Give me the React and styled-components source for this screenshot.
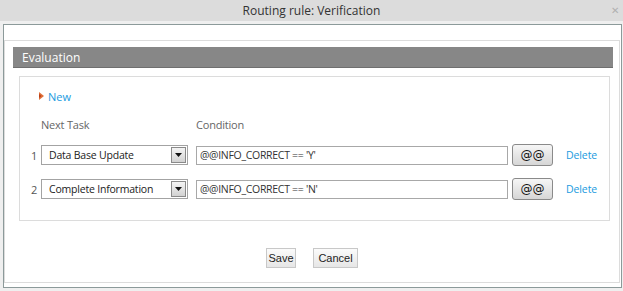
import styled, { createGlobalStyle } from "styled-components";

const Global = createGlobalStyle`
  html, body {
    margin: 0;
    padding: 0;
    background: #efefef;
    font-family: "Open Sans", "Liberation Sans", sans-serif;
  }
`

const Window = styled.div`
  width: 623px;
  height: 291px;
  background: #efefef;
  display: flex;
  flex-direction: column;
  overflow: hidden;
`

const TitleBar = styled.div`
  height: 21px;
  background: #dcdcdc;
  display: grid;
  grid-template-columns: 20px 1fr 20px;
  align-items: center;
  font-size: 12px;
  color: #333;
`

const Title = styled.div`
  grid-column: 2;
  text-align: center;
  line-height: 21px;
`

const Close = styled.div`
  color: #b0b0b0;
  font-size: 10px;
  line-height: 21px;
  text-align: center;
  padding-left: 4px;
`

const Panel = styled.div`
  margin: 3px 1px 0 3px;
  height: 262px;
  border: 1px solid #8c9a9a;
  background: #fff;
  display: flex;
  flex-direction: column;
`

const Toolbar = styled.div`
  height: 15px;
`

const Content = styled.div`
  height: 243px;
  margin-right: 1px;
  border: 1px solid #dcdcdc;
  box-sizing: border-box;
  display: flex;
  flex-direction: column;
`

const SectionHeader = styled.div`
  margin: 6px 6px 0 8px;
  height: 20px;
  background: #878787;
  border-bottom: 1px solid #6f6f6f;
  color: #fff;
  font-size: 12px;
  line-height: 21px;
  padding-left: 9px;
`

const Box = styled.div`
  margin: 8px 9px 0 14px;
  border: 1px solid #dcdcdc;
  padding: 11px 0 20px 11px;
`

const NewLink = styled.a`
  display: flex;
  align-items: center;
  gap: 3px;
  margin-left: 8px;
  height: 16px;
  color: #1a9be0;
  font-size: 11px;
  text-decoration: none;
`

const Table = styled.div`
  margin-top: 13px;
  display: grid;
  grid-template-columns: 10px 155px 316px 54px auto;
  align-items: center;
  row-gap: 12px;
`

const HeadCell = styled.div`
  font-size: 11px;
  letter-spacing: -0.2px;
  color: #666;
  line-height: 16px;
  margin-bottom: -1px;
`

const Num = styled.div`
  font-size: 11px;
  color: #555;
`

const Select = styled.div`
  width: 147px;
  height: 20px;
  box-sizing: border-box;
  border: 1px solid #a3a3a3;
  background: #fff;
  display: flex;
  align-items: center;
  justify-content: space-between;
  padding: 0 1px 0 7px;
  font-size: 10.5px;
  letter-spacing: -0.2px;
  color: #222;
`

const Arrow = styled.div`
  width: 15px;
  height: 16px;
  box-sizing: border-box;
  border: 1px solid #8a8a8a;
  background: linear-gradient(#f4f4f4, #d2d2d2);
  display: flex;
  align-items: center;
  justify-content: center;
`

const Input = styled.input`
  width: 312px;
  height: 19px;
  box-sizing: border-box;
  border: 1px solid #a8a8a8;
  padding: 0 3px;
  font-family: "Open Sans", "Liberation Sans", sans-serif;
  font-size: 10.5px;
  letter-spacing: -0.3px;
  color: #333;
  outline: none;
`

const VarButton = styled.button`
  width: 41px;
  height: 22px;
  border: 1px solid #8a8a8a;
  border-radius: 3px;
  background: linear-gradient(#f6f6f6, #d6d6d6);
  font-family: "DejaVu Sans", sans-serif;
  font-size: 12px;
  color: #111;
  padding: 0;
`

const Delete = styled.a`
  color: #1a9be0;
  font-size: 10.5px;
  letter-spacing: -0.1px;
`

const Actions = styled.div`
  margin-top: 27px;
  display: flex;
  justify-content: center;
  gap: 17px;
`

const Button = styled.button`
  height: 20px;
  width: ${p => p.w}px;
  padding: 0;
  border: 1px solid #c8c8c8;
  background: linear-gradient(#fbfbfb, #e6e6e6);
  font-family: "Liberation Sans", sans-serif;
  font-size: 11px;
  color: #222;
`

const rows = [
  { task: "Data Base Update", cond: "@@INFO_CORRECT == 'Y'" },
  { task: "Complete Information", cond: "@@INFO_CORRECT == 'N'" },
]

const App = () => {
  return (
    <>
      <Global />
      <Window>
        <TitleBar>
          <Title>Routing rule: Verification</Title>
          <Close>✕</Close>
        </TitleBar>
        <Panel>
          <Toolbar />
          <Content>
            <SectionHeader>Evaluation</SectionHeader>
            <Box>
              <NewLink>
                <svg width="6" height="8" viewBox="0 0 6 8">
                  <path d="M0 0 L5 4 L0 8 Z" fill="#e0703a" />
                  <path d="M0 2 L2.5 4 L0 6 Z" fill="#b8401a" />
                </svg>
                New
              </NewLink>
              <Table>
                <span />
                <HeadCell>Next Task</HeadCell>
                <HeadCell>Condition</HeadCell>
                <span />
                <span />
                {rows.map((r, i) => (
                  <>
                    <Num key={"n" + i}>{i + 1}</Num>
                    <Select key={"s" + i}>
                      {r.task}
                      <Arrow>
                        <svg width="7" height="4" viewBox="0 0 7 4">
                          <path d="M0 0 H7 L3.5 4 Z" fill="#111" />
                        </svg>
                      </Arrow>
                    </Select>
                    <Input key={"c" + i} readOnly defaultValue={r.cond} />
                    <VarButton key={"b" + i}>@@</VarButton>
                    <Delete key={"d" + i}>Delete</Delete>
                  </>
                ))}
              </Table>
            </Box>
            <Actions>
              <Button w={30}>Save</Button>
              <Button w={45}>Cancel</Button>
            </Actions>
          </Content>
        </Panel>
      </Window>
    </>
  )
}

export default App;
